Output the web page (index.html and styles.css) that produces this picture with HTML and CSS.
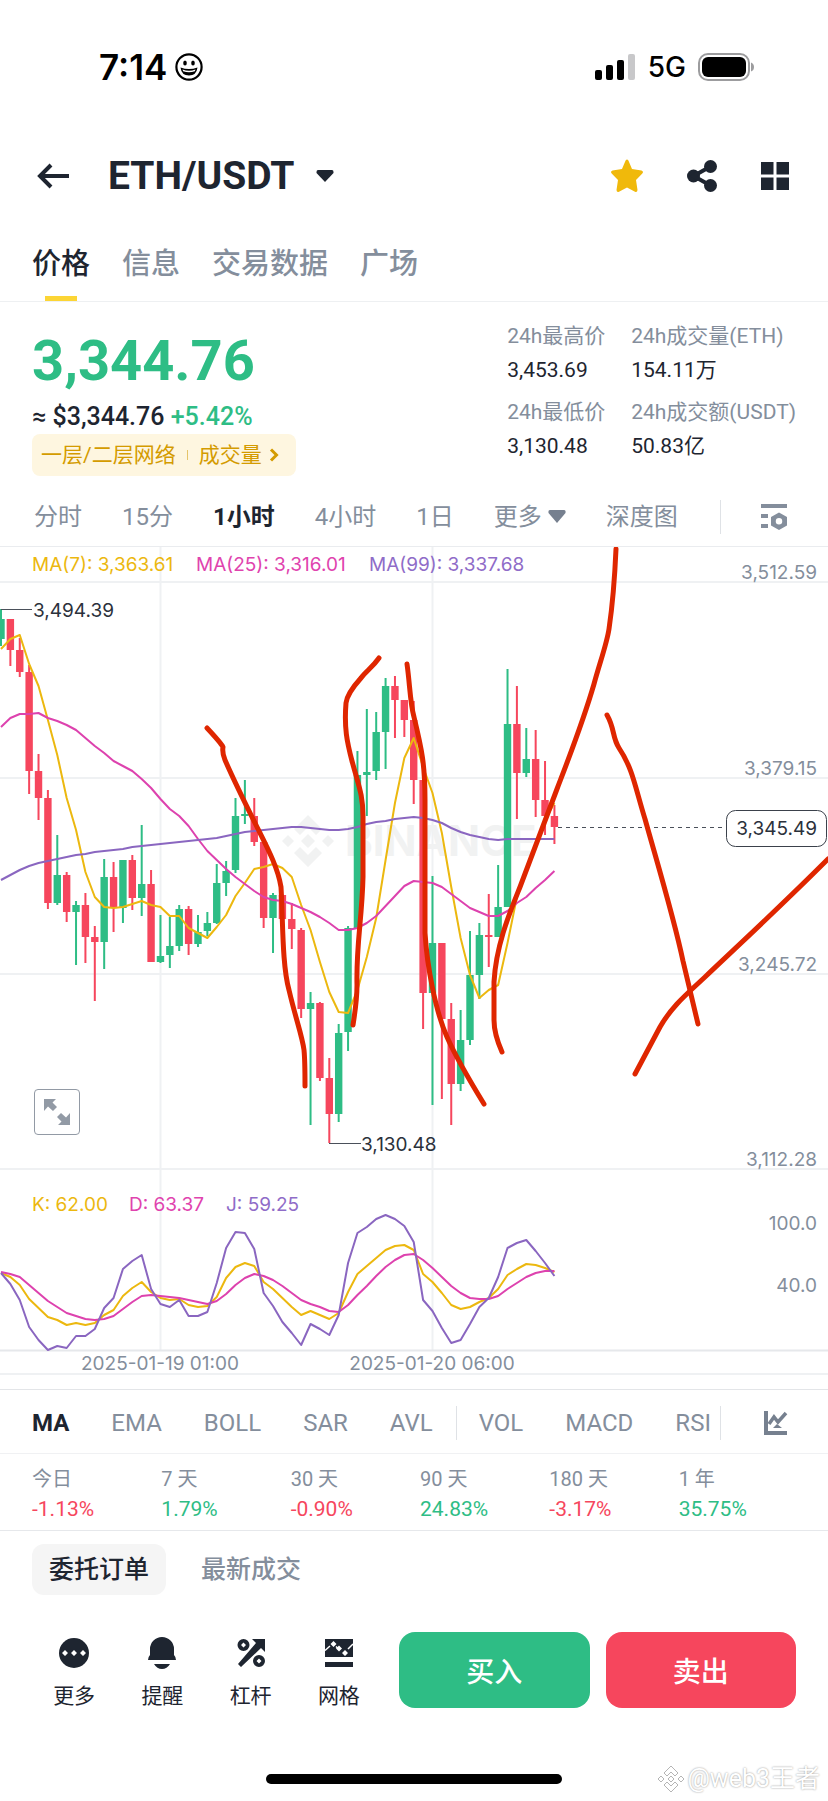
FILE: index.html
```html
<!DOCTYPE html>
<html lang="zh-CN">
<head>
  <meta charset="UTF-8" />
  <meta name="viewport" content="width=device-width, initial-scale=1.0"/>
  <title>ETH/USDT</title>
  <link rel="stylesheet" href="styles.css">
</head>
<body>
  <div class="status">
    <span class="time">7:14</span>
    <svg class="smiley" width="28" height="28" viewBox="0 0 28 28">
      <circle cx="14" cy="14" r="12.6" fill="none" stroke="#000" stroke-width="2.2"/>
      <ellipse cx="10" cy="10" rx="1.8" ry="2.6"/>
      <ellipse cx="18" cy="10" rx="1.8" ry="2.6"/>
      <path d="M5.500 14.500Q14 17.500 22.500 14.500Q21.500 22.500 14 22.500Q6.500 22.500 5.500 14.500Z"/>
      <path d="M7.500 16.500Q14 19 20.500 16.500L19.800 18.300Q14 20 8.200 18.300Z" fill="#fff"/>
    </svg>
    <svg class="signal" width="42" height="28" viewBox="0 0 42 28">
      <rect x="1" y="17" width="7" height="10" rx="2"/>
      <rect x="12" y="12" width="7" height="15" rx="2"/>
      <rect x="23" y="7" width="7" height="20" rx="2"/>
      <rect x="34" y="1" width="7" height="26" rx="2" fill="#c8c8ca"/>
    </svg>
    <span class="network">5G</span>
    <svg class="battery" width="58" height="28" viewBox="0 0 58 28">
      <rect x="1" y="1" width="50" height="26" rx="9" fill="none" stroke="#9c9c9e" stroke-width="2"/>
      <rect x="4" y="4" width="44" height="20" rx="6"/>
      <path d="M53 9.500Q56 10.500 56 14T53 18.500Z" fill="#9c9c9e"/>
    </svg>
  </div>

  <header class="header">
    <button class="back" aria-label="返回">
      <svg width="34" height="28" viewBox="0 0 34 28" fill="none" stroke="#1e2530" stroke-width="4">
        <path d="M33 14H4M15 3L4 14L15 25"/>
      </svg>
    </button>
    <h1>ETH/USDT</h1>
    <button class="pair-menu" aria-label="切换交易对">
      <svg width="18" height="14" viewBox="0 0 18 14" fill="#1e2530"><path d="M2 1H16Q17.500 1 17.500 3V4L9 13L.5 4V3Q.5 1 2 1Z"/></svg>
    </button>
    <div class="actions">
      <button aria-label="收藏">
        <svg width="34" height="34" viewBox="0 0 34 34" fill="#f0b90b"><path d="M15.600 1.500Q17 -.5 18.400 1.500L22 10L31.500 11.500Q34 12.500 32.300 14.500L26 21L27.500 31Q27.300 33.500 25 32.700L17 28.500L9 32.700Q6.700 33.500 6.500 31L8 21L1.700 14.500Q0 12.500 2.500 11.500L12 10Z"/></svg>
      </button>
      <button aria-label="分享">
        <svg width="32" height="34" viewBox="0 0 32 34" fill="#1e2530">
          <circle cx="24.500" cy="7.500" r="6.500"/><circle cx="7.500" cy="17" r="6.500"/><circle cx="24.500" cy="26.500" r="6.500"/>
          <path d="M24.500 7.500L7.500 17L24.500 26.500" fill="none" stroke="#1e2530" stroke-width="4"/>
        </svg>
      </button>
      <button aria-label="布局">
        <svg width="30" height="30" viewBox="0 0 30 30" fill="#1e2530">
          <path d="M1 1H13.500V13.500H1ZM16.500 1H29V13.500H16.500ZM1 16.500H13.500V29H1ZM16.500 16.500H29V29H16.500Z"/>
        </svg>
      </button>
    </div>
  </header>

  <nav class="tabs">
    <a href="#" class="active">价格</a>
    <a href="#">信息</a>
    <a href="#">交易数据</a>
    <a href="#">广场</a>
  </nav>

  <section class="summary">
    <div class="quote">
      <div class="price">3,344.76</div>
      <div class="approx">≈ $3,344.76 <span class="up">+5.42%</span></div>
      <a href="#" class="tag">
        <span>一层/二层网络</span>
        <i></i>
        <span>成交量</span>
        <svg width="10" height="14" viewBox="0 0 10 14" fill="none" stroke="#d49b00" stroke-width="3"><path d="M2 1.500L7.500 7L2 12.500"/></svg>
      </a>
    </div>
    <dl class="day">
      <div><dt>24h最高价</dt><dd>3,453.69</dd></div>
      <div><dt>24h成交量(ETH)</dt><dd>154.11万</dd></div>
      <div><dt>24h最低价</dt><dd>3,130.48</dd></div>
      <div><dt>24h成交额(USDT)</dt><dd>50.83亿</dd></div>
    </dl>
  </section>

  <div class="intervals">
    <div class="options">
      <button>分时</button>
      <button>15分</button>
      <button class="active">1小时</button>
      <button>4小时</button>
      <button>1日</button>
      <button>更多 <svg width="18" height="13" viewBox="0 0 18 13" fill="#76808f"><path d="M2 0H16Q18 0 17.500 3L9 13L.5 3Q0 0 2 0Z"/></svg></button>
      <button>深度图</button>
    </div>
    <button class="tool" aria-label="图表设置">
      <svg width="28" height="28" viewBox="0 0 28 28" fill="#848e9c">
        <path d="M1 1H27V5H1ZM1 11H8V15H1ZM1 21H8V25H1Z"/>
        <path d="M19 9.500L27 14V22.500L19 27L11 22.500V14ZM19 15A3.200 3.200 0 1 0 19 21.500A3.200 3.200 0 1 0 19 15Z" fill-rule="evenodd"/>
      </svg>
    </button>
  </div>

  <div class="chart">
    <svg id="chart" viewBox="0 547 828 842">
      <g class="grid">
        <path d="M0 582H828M0 778H828M0 974H828M0 1169H828M0 1374H828M160.500 547V1350M432.500 547V1350"/>
        <path class="base" d="M0 1350.500H828"/>
      </g>
      <g class="brand">
        <path d="M308 815L322 829L316 835L308 827L300 835L294 829ZM308 867L322 853L316 847L308 855L300 847L294 853ZM308 834L315 841L308 848L301 841ZM288 835L294 841L288 847L282 841ZM328 835L334 841L328 847L322 841Z"/>
        <text x="345" y="856">BINANCE</text>
      </g>
      <g id="candles"></g>
      <g id="lines"></g>

      <g class="legend">
        <text x="32" y="571" class="yellow">MA(7): 3,363.61</text>
        <text x="196" y="571" class="pink">MA(25): 3,316.01</text>
        <text x="369" y="571" class="purple">MA(99): 3,337.68</text>
        <text x="32" y="1211" class="yellow">K: 62.00</text>
        <text x="129" y="1211" class="pink">D: 63.37</text>
        <text x="226" y="1211" class="purple">J: 59.25</text>
      </g>

      <g class="axis">
        <text x="817" y="579">3,512.59</text>
        <text x="817" y="775">3,379.15</text>
        <text x="817" y="971">3,245.72</text>
        <text x="817" y="1166">3,112.28</text>
        <text x="817" y="1230">100.0</text>
        <text x="817" y="1292">40.0</text>
        <text x="160" y="1370" class="date">2025-01-19 01:00</text>
        <text x="432" y="1370" class="date">2025-01-20 06:00</text>
      </g>

      <g class="extremes">
        <path d="M1 609.500H32M329 1143.500H361"/>
        <text x="33" y="617">3,494.39</text>
        <text x="361" y="1151">3,130.48</text>
      </g>

      <path class="last-line" d="M558 827.500H726"/>

      <g class="strokes">
        <path d="M207 728Q221 743 223 747Q222 753 225 760C235 783 245 803 257 827C268 849 278 868 281 887C283 920 282 965 289 990C296 1020 302 1035 304 1050Q305 1060 305 1086"/>
        <path d="M379 658C372 668 366 671 361 678C352 688 347 695 346 703C344 728 347 742 352 761C359 787 363 795 363 817V877C362 920 356 945 357 985Q357 1000 353 1025"/>
        <path d="M407 664C410 685 410 703 414 717C422 750 425 765 425 800V933C427 965 435 1010 447 1037C455 1055 465 1073 484 1104"/>
        <path d="M502 1052Q494 1034 494 1020V982C496 945 510 912 520 887C530 860 542 828 557 789C570 755 583 722 594 684C600 662 607 643 609 629Q614 595 616 549"/>
        <path d="M607 715C615 729 612 737 619 748C633 769 635 787 645 819C657 862 674 918 683 961L698 1024"/>
        <path d="M635 1074L660 1027C672 1006 687 994 705 977C745 939 780 907 828 859"/>
      </g>

      <g class="last">
        <rect x="726.500" y="810.500" width="100" height="36" rx="9"/>
        <text x="817" y="835">3,345.49</text>
      </g>
    </svg>
    <button class="expand" aria-label="全屏">
      <svg width="26" height="26" viewBox="0 0 26 26" fill="#929aa5">
        <path d="M0 0H12L8.500 3.500L13 8L9 12L4 7.500L0 12ZM26 26H14L17.500 22.500L13 18L17 14L22 18.500L26 14Z"/>
      </svg>
    </button>
  </div>

  <div class="indicators">
    <div class="options">
      <button class="active">MA</button>
      <button>EMA</button>
      <button>BOLL</button>
      <button>SAR</button>
      <button>AVL</button>
      <button class="sub">VOL</button>
      <button>MACD</button>
      <button>RSI</button>
    </div>
    <button class="tool" aria-label="指标">
      <svg width="24" height="26" viewBox="0 0 24 26" fill="#76808f">
        <path d="M0 1H4V21H23V25H0Z"/>
        <path d="M5 14L10 7L14 12L22 3" fill="none" stroke="#76808f" stroke-width="3.500"/>
        <path d="M13 14L18 18H9Z"/>
      </svg>
    </button>
  </div>

  <dl class="performance">
    <div><dt>今日</dt><dd class="down">-1.13%</dd></div>
    <div><dt>7 天</dt><dd class="up">1.79%</dd></div>
    <div><dt>30 天</dt><dd class="down">-0.90%</dd></div>
    <div><dt>90 天</dt><dd class="up">24.83%</dd></div>
    <div><dt>180 天</dt><dd class="down">-3.17%</dd></div>
    <div><dt>1 年</dt><dd class="up">35.75%</dd></div>
  </dl>

  <div class="orders">
    <button class="active">委托订单</button>
    <button>最新成交</button>
  </div>

  <footer class="bottom">
    <div class="shortcuts">
      <button>
        <svg width="32" height="32" viewBox="0 0 32 32" fill="#1e2530">
          <circle cx="16" cy="16" r="15"/>
          <path d="M7 13L10 16L7 19L4 16ZM16 13L19 16L16 19L13 16ZM25 13L28 16L25 19L22 16Z" fill="#fff"/>
        </svg>
        更多
      </button>
      <button>
        <svg width="32" height="32" viewBox="0 0 32 32" fill="#1e2530">
          <path d="M4 18V12A12 12 0 0 1 28 12V18Q30 20 30 23H2Q2 20 4 18ZM8 27H24Q21 32 16 32T8 27Z"/>
        </svg>
        提醒
      </button>
      <button>
        <svg width="32" height="32" viewBox="0 0 32 32" fill="#1e2530">
          <path d="M17 2H30V15L26 11L6 30L3 27L21 6Z"/>
          <path d="M8.500 2A6 6 0 1 0 8.500 14A6 6 0 1 0 8.500 2ZM8.500 5.500L11 8L8.500 10.500L6 8ZM24 18A6 6 0 1 0 24 30A6 6 0 1 0 24 18ZM24 21.500L26.500 24L24 26.500L21.500 24Z" fill-rule="evenodd"/>
        </svg>
        杠杆
      </button>
      <button>
        <svg width="32" height="32" viewBox="0 0 32 32" fill="#1e2530">
          <path d="M2 2H30V20H2ZM2 25H30V30H2Z"/>
          <path d="M2 13.500L7 9M25 12L30 7M13 9.500L15.500 12" stroke="#fff" stroke-width="1.500"/>
          <path d="M10.500 4L13.500 7L10.500 10L7.500 7ZM16 8.500L19 11.500L16 14.500L13 11.500ZM22 13L25 16L22 19L19 16Z" fill="#fff"/>
        </svg>
        网格
      </button>
    </div>
    <button class="buy">买入</button>
    <button class="sell">卖出</button>
  </footer>

  <div class="home-bar"></div>
  <div class="author">
    <svg width="28" height="28" viewBox="0 0 28 28" fill="#fff" stroke="#b5b5b5">
      <path d="M14 1L21 8L18 11L14 7L10 11L7 8ZM14 27L21 20L18 17L14 21L10 17L7 20ZM14 11L17 14L14 17L11 14ZM4 11L7 14L4 17L1 14ZM24 11L27 14L24 17L21 14Z"/>
    </svg>
    @web3王者
  </div>

  <script>
    const STEP = 9.38;
    const ns = "http://www.w3.org/2000/svg";
    const x = i => 1 + i * STEP;

    // color, wick top, body top, body bottom, wick bottom
    const candles = [
      ["g", 609, 619, 639, 646], ["r", 619, 619, 650, 666], ["r", 638, 650, 672, 677], ["r", 665, 672, 771, 794],
      ["r", 754, 771, 798, 820], ["r", 790, 798, 903, 909], ["g", 835, 875, 903, 905], ["r", 872, 875, 912, 922],
      ["g", 901, 905, 912, 965], ["r", 893, 905, 937, 963], ["r", 926, 937, 942, 1001], ["g", 859, 877, 942, 969],
      ["r", 862, 877, 908, 932], ["g", 860, 860, 908, 923], ["r", 855, 860, 898, 910], ["g", 825, 884, 898, 916],
      ["r", 870, 884, 962, 962], ["g", 915, 956, 962, 963], ["g", 917, 946, 955, 968], ["g", 905, 909, 946, 951],
      ["r", 906, 909, 944, 955], ["g", 915, 932, 944, 947], ["g", 912, 923, 931, 936], ["g", 864, 883, 923, 924],
      ["g", 861, 871, 883, 896], ["g", 798, 816, 870, 873], ["g", 780, 814, 816, 824], ["r", 798, 816, 842, 846],
      ["r", 842, 842, 918, 928], ["g", 893, 895, 918, 953], ["r", 894, 895, 919, 919], ["r", 903, 919, 929, 949],
      ["r", 928, 930, 1009, 1018], ["g", 992, 1003, 1009, 1125], ["r", 1002, 1003, 1078, 1081], ["r", 1058, 1078, 1114, 1143],
      ["g", 1024, 1033, 1114, 1122], ["g", 926, 928, 1032, 1051], ["g", 751, 775, 928, 928], ["g", 709, 772, 775, 816],
      ["g", 712, 732, 771, 780], ["g", 678, 686, 732, 769], ["r", 676, 686, 700, 738], ["r", 700, 700, 720, 737],
      ["r", 701, 720, 780, 804], ["r", 780, 780, 993, 1029], ["g", 876, 943, 993, 1105], ["r", 943, 943, 1019, 1099],
      ["r", 1003, 1019, 1084, 1125], ["g", 1010, 1040, 1084, 1091], ["g", 931, 975, 1040, 1045], ["g", 923, 935, 975, 999],
      ["r", 894, 935, 937, 967], ["g", 865, 907, 937, 937], ["g", 669, 724, 907, 907], ["r", 686, 724, 773, 819],
      ["g", 728, 759, 773, 777], ["r", 730, 759, 800, 817], ["r", 761, 800, 816, 835], ["r", 805, 816, 827, 844]
    ];

    const ma7 = [649, 639, 635, 664, 686, 720, 755, 798, 830, 872, 897, 907, 908, 907, 904, 901, 905, 907, 916, 916,
      928, 933, 938, 927, 915, 896, 883, 869, 867, 864, 868, 877, 905, 930, 962, 992, 1012, 1013, 990, 957,
      918, 860, 803, 758, 738, 767, 793, 833, 887, 938, 975, 998, 990, 985, 943, 897, 868, 844, 820, 803];
    const ma25 = [727, 718, 714, 714, 713, 718, 721, 725, 730, 738, 746, 753, 761, 766, 771, 779, 788, 799, 809, 816,
      826, 839, 851, 860, 869, 877, 884, 891, 897, 900, 901, 904, 908, 912, 917, 923, 930, 930, 928, 923,
      916, 906, 896, 886, 881, 882, 883, 887, 894, 901, 908, 912, 916, 916, 911, 903, 897, 888, 880, 871];
    const ma99 = [880, 875, 870, 866, 863, 861, 859, 857, 855, 854, 852, 851, 850, 849, 847, 846, 845, 844, 843, 842,
      841, 840, 839, 838, 836, 834, 832, 831, 830, 829, 828, 827, 827, 828, 829, 830, 830, 829, 827, 824,
      822, 821, 819, 818, 817, 818, 820, 823, 828, 832, 835, 837, 839, 840, 839, 839, 839, 839, 839, 839];
    const k = [1273, 1277, 1285, 1299, 1308, 1317, 1320, 1325, 1323, 1325, 1323, 1315, 1310, 1296, 1288, 1282, 1292, 1298, 1300, 1299,
      1305, 1307, 1306, 1297, 1278, 1267, 1263, 1266, 1282, 1289, 1298, 1307, 1315, 1311, 1315, 1319, 1313, 1292, 1274, 1266,
      1258, 1250, 1246, 1245, 1250, 1274, 1282, 1293, 1305, 1309, 1307, 1302, 1298, 1289, 1275, 1269, 1264, 1265, 1268, 1272];
    const d = [1272, 1274, 1277, 1285, 1293, 1301, 1307, 1313, 1316, 1319, 1320, 1319, 1316, 1309, 1302, 1296, 1295, 1296, 1297, 1298,
      1300, 1302, 1304, 1301, 1294, 1285, 1278, 1274, 1276, 1280, 1286, 1293, 1300, 1304, 1307, 1311, 1312, 1305, 1295, 1286,
      1276, 1267, 1260, 1255, 1254, 1260, 1268, 1277, 1286, 1293, 1298, 1299, 1299, 1296, 1289, 1283, 1277, 1273, 1271, 1271];
    const j = [1273, 1284, 1300, 1327, 1340, 1350, 1346, 1348, 1336, 1336, 1329, 1308, 1298, 1269, 1261, 1255, 1289, 1304, 1307, 1300,
      1316, 1316, 1312, 1283, 1248, 1232, 1233, 1249, 1293, 1306, 1322, 1333, 1345, 1324, 1329, 1335, 1315, 1263, 1233, 1227,
      1219, 1215, 1219, 1226, 1242, 1300, 1311, 1328, 1343, 1340, 1324, 1307, 1298, 1277, 1248, 1243, 1240, 1251, 1263, 1276];

    function add(parent, tag, attrs) {
      const el = document.createElementNS(ns, tag);
      for (const name in attrs) el.setAttribute(name, attrs[name]);
      document.getElementById(parent).appendChild(el);
    }

    candles.forEach(([color, high, top, bottom, low], i) => {
      const cls = color === "g" ? "rise" : "fall";
      add("candles", "rect", { class: cls, x: x(i) - 1, y: high, width: 2, height: low - high });
      add("candles", "rect", { class: cls, x: x(i) - 3.7, y: top, width: 7.4, height: bottom - top });
    });

    function line(data, cls) {
      add("lines", "polyline", { class: cls, points: data.map((y, i) => x(i) + "," + y).join(" ") });
    }
    line(ma7, "yellow");
    line(ma25, "pink");
    line(ma99, "purple");
    line(k, "yellow");
    line(d, "pink");
    line(j, "purple");
  </script>
</body>
</html>
```
FILE: styles.css
```css
* {
  box-sizing: border-box;
}
body {
  position: relative;
  margin: 0;
  background: #fff;
  color: #1e2530;
  font-family: Roboto, "Noto Sans CJK SC", sans-serif;
}
button {
  border: 0;
  padding: 0;
  background: none;
  color: inherit;
  font: inherit;
  white-space: nowrap;
}
a {
  color: inherit;
  text-decoration: none;
}
svg {
  display: block;
}
dl, dd, h1 {
  margin: 0;
}
.up {
  color: #2ebd85;
}
.down {
  color: #f6465d;
}

/* top */
.status {
  display: flex;
  align-items: center;
  padding: 43px 72px 0 99px;
  color: #000;
  font-family: Inter, sans-serif;
  line-height: 48px;
}
.time {
  font-size: 35px;
  font-weight: 600;
}
.smiley {
  margin-left: 8px;
}
.signal {
  margin-left: auto;
}
.network {
  margin: 0 12px;
  font-size: 28px;
  font-weight: 500;
}
.header {
  display: flex;
  align-items: center;
  padding: 61px 38px 0 36px;
}
.header h1 {
  margin: 0 22px 0 38px;
  font-size: 39px;
  font-weight: 700;
  line-height: 48px;
}
.actions {
  display: flex;
  align-items: center;
  gap: 42px;
  margin-left: auto;
}
.tabs {
  display: flex;
  gap: 32px;
  padding: 44px 32px 0;
  border-bottom: 1px solid #eef0f2;
  color: #848e9c;
  font-size: 29px;
  font-weight: 500;
  line-height: 40px;
}
.tabs a {
  position: relative;
  padding-bottom: 17px;
}
.tabs .active {
  color: #1e2530;
}
.tabs .active::after {
  content: "";
  position: absolute;
  left: 13px;
  right: 13px;
  bottom: 0;
  height: 5px;
  background: #fcd535;
}

/* price */
.summary {
  display: flex;
  justify-content: space-between;
  padding: 0 32px;
}
.quote {
  padding-top: 29px;
}
.price {
  color: #2ebd85;
  font-size: 56px;
  font-weight: 700;
  line-height: 60px;
}
.approx {
  margin-top: 10px;
  font-size: 25px;
  font-weight: 500;
  line-height: 32px;
}
.tag {
  display: inline-flex;
  align-items: center;
  margin-top: 1px;
  padding: 0 17px 0 9px;
  border-radius: 8px;
  background: #fef6e0;
  color: #d49b00;
  font-size: 21px;
  line-height: 42px;
}
.tag i {
  width: 1px;
  height: 10px;
  margin: 0 11px;
  background: #e5c46a;
}
.tag svg {
  margin-left: 7px;
}
.day {
  display: grid;
  grid-template-columns: 124px auto;
  gap: 8px 0;
  align-content: start;
  padding-top: 17px;
  font-size: 21px;
  line-height: 34px;
  white-space: nowrap;
}
.day dt {
  color: #848e9c;
}

/* chart */
.intervals, .indicators {
  display: flex;
  align-items: center;
  justify-content: space-between;
  color: #848e9c;
  font-size: 24px;
  line-height: 34px;
}
.options {
  display: flex;
  gap: 42px;
}
.intervals {
  padding: 24px 40px 12px 34px;
  border-bottom: 1px solid #eaecef;
}
.intervals .options {
  gap: 40px;
}
.intervals .options svg {
  display: inline-block;
  vertical-align: 2px;
}
.options .active {
  color: #1e2530;
  font-weight: 700;
}
.tool {
  display: flex;
  align-items: center;
  justify-content: flex-end;
  width: 68px;
  height: 34px;
  border-left: 1px solid #dfe2e6;
}
.chart {
  position: relative;
}
#chart {
  width: 100%;
  font-family: Inter, sans-serif;
  font-size: 19px;
}
.grid path {
  fill: none;
  stroke: #eff1f3;
  stroke-width: 2;
}
.grid .base {
  stroke: #e6e8eb;
}
.brand {
  fill: #f1f2f2;
}
.brand text {
  font-size: 42px;
  font-weight: 700;
}
.rise {
  fill: #2ebd85;
}
.fall {
  fill: #f6465d;
}
#lines polyline {
  fill: none;
  stroke-width: 2;
  stroke-linejoin: round;
}
#lines .yellow {
  stroke: #ecb80f;
}
#lines .pink {
  stroke: #dd42ae;
}
#lines .purple {
  stroke: #8a66c0;
}
.legend .yellow {
  fill: #ecb80f;
}
.legend .pink {
  fill: #e043ae;
}
.legend .purple {
  fill: #8f6cc8;
}
.axis text {
  fill: #848e9c;
  text-anchor: end;
}
.axis .date {
  text-anchor: middle;
}
.extremes text, .last text {
  fill: #2b313b;
}
.extremes path {
  stroke: #4a505a;
}
.last-line {
  stroke: #4a505a;
  stroke-dasharray: 4 4;
}
.last rect {
  fill: #fff;
  stroke: #3b414b;
}
.last text {
  text-anchor: end;
}
.strokes path {
  fill: none;
  stroke: #df2600;
  stroke-width: 5;
  stroke-linecap: round;
  stroke-linejoin: round;
}
.expand {
  display: grid;
  place-items: center;
  position: absolute;
  left: 34px;
  bottom: 254px;
  width: 46px;
  height: 46px;
  border: 1px solid #929aa5;
  border-radius: 4px;
  background: #fff;
}

/* indicators */
.indicators {
  padding: 16px 40px 13px 32px;
  border-top: 1px solid #e3e5e8;
  border-bottom: 1px solid #f0f1f3;
}
.indicators .sub {
  margin-left: -19px;
  padding-left: 22px;
  border-left: 1px solid #dfe2e6;
}
.performance {
  display: grid;
  grid-template-columns: repeat(6, 1fr);
  padding: 10px 20px 6px 32px;
  border-bottom: 1px solid #e6e8eb;
  font-size: 20px;
  line-height: 30px;
}
.performance dt {
  color: #848e9c;
}
.performance dd {
  font-size: 21px;
}

.orders {
  display: flex;
  gap: 18px;
  padding: 13px 32px 0;
  color: #848e9c;
  font-size: 25px;
  font-weight: 500;
  line-height: 51px;
}
.orders button {
  padding: 0 17px;
  border-radius: 12px;
}
.orders .active {
  background: #f5f5f5;
  color: #1e2530;
}

/* bottom bar */
.bottom {
  display: flex;
  gap: 16px;
  padding: 37px 32px 66px 30px;
}
.shortcuts {
  display: flex;
  flex: 0 0 353px;
}
.shortcuts button {
  flex: 1;
  padding-top: 5px;
  font-size: 21px;
  line-height: 24px;
}
.shortcuts svg {
  margin: 0 auto 15px;
}
.buy, .sell {
  flex: 1;
  height: 76px;
  border-radius: 16px;
  color: #fff;
  font-size: 28px;
  font-weight: 500;
}
.buy {
  background: #2ebd85;
}
.sell {
  background: #f6465d;
}
.home-bar {
  width: 296px;
  height: 10px;
  margin: 0 auto 17px;
  border-radius: 5px;
  background: #000;
}
.author {
  display: flex;
  align-items: center;
  gap: 2px;
  position: absolute;
  right: 8px;
  bottom: 5px;
  color: #fff;
  font-size: 25px;
  line-height: 34px;
  text-shadow: 0 0 2px #8a8a8a;
}
```
